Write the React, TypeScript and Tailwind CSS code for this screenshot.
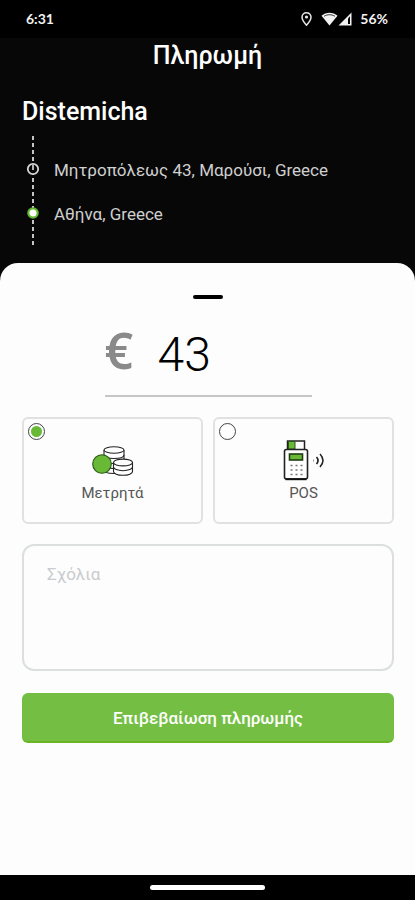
import { useState } from "react";
import type { ReactNode } from "react";

function LocationIcon() {
  return (
    <svg className="h-[14px] w-[11px]" viewBox="0 0 11 14" fill="none" aria-hidden="true">
      <path d="M5.5 .8C2.9.8 1 2.7 1 5.2c0 3 4.5 8 4.5 8s4.500-5 4.500-8C10 2.700 8.100.8 5.500.8Z" stroke="#e6e6e6" strokeWidth="1.500" />
      <circle cx="5.500" cy="5" r="1.600" fill="#e6e6e6" />
    </svg>
  );
}

function WifiIcon() {
  return (
    <svg className="h-[14px] w-[17px]" viewBox="0 0 17 14" aria-hidden="true">
      <path d="M8.500 13.500 .5 3.700C5-.3 12-.3 16.500 3.700L8.500 13.500Z" fill="#f2f2f2" />
      <path d="M3 4.300C6.500 2.200 10.500 2.200 14 4.300" stroke="#000" strokeWidth=".8" fill="none" />
    </svg>
  );
}

function SignalIcon() {
  return (
    <svg className="h-[14px] w-[14px]" viewBox="0 0 14 14" aria-hidden="true">
      <path d="M13.500 .5v13H.5L13.500.5Z" fill="#f2f2f2" />
      <path d="M10 6.500 12 4.300V12h-2Z" fill="#000" />
    </svg>
  );
}

function RouteLine() {
  return (
    <svg className="h-[110px] w-[14px] shrink-0" viewBox="0 0 14 110" fill="none" aria-hidden="true">
      <path d="M7 0V110" stroke="#c4c4c4" strokeWidth="2" strokeDasharray="4 3" />
      <circle cx="7" cy="33" r="5.200" fill="#070707" stroke="#d6d6d6" strokeWidth="1.800" />
      <path d="M7 29V34" stroke="#b3b3b3" strokeWidth="2" />
      <circle cx="7" cy="77" r="4.700" fill="#fff" stroke="#62b82e" strokeWidth="2.200" />
    </svg>
  );
}

function CoinsIcon() {
  return (
    <svg className="mb-1 h-[32px] w-[44px]" viewBox="0 0 44 32" fill="none" stroke="#222" strokeWidth="1.100" aria-hidden="true">
      <path d="M13 5v20c0 2 4 3.500 10 3.500s10-1.500 10-3.500V5" fill="#fff" />
      <ellipse cx="23" cy="5" rx="10" ry="3.300" fill="#fff" />
      <path d="M13 10c0 2 4 3.500 10 3.500S33 12 33 10M13 15c0 2 4 3.500 10 3.500S33 17 33 15M13 20c0 2 4 3.500 10 3.500" />
      <path d="M22.500 17.500v9c0 2 4 3.800 9.500 3.800s9.500-1.800 9.500-3.800v-9" fill="#fff" />
      <ellipse cx="32" cy="17.500" rx="9.500" ry="3.400" fill="#fff" />
      <path d="M22.500 22c0 2 4 3.700 9.500 3.700s9.500-1.700 9.500-3.700" />
      <circle cx="11" cy="19" r="9.300" fill="#68b936" stroke="#2c5716" />
    </svg>
  );
}

function PosIcon() {
  return (
    <svg className="h-[42px] w-[42px]" viewBox="0 0 42 42" fill="none" aria-hidden="true">
      <path d="M4.500 10V2h17v8" fill="#fff" stroke="#222" strokeWidth="1.500" />
      <path d="M5.500 2.500H12V10H5.500Z" fill="#68b936" stroke="#2c5716" />
      <rect x="1.500" y="10.500" width="23" height="29.500" rx="2" fill="#fff" stroke="#222" strokeWidth="1.600" />
      <path d="M2.500 40.200H23.500" stroke="#111" strokeWidth="2" />
      <rect x="6.500" y="15" width="13" height="6" fill="#68b936" stroke="#1f3d10" strokeWidth="1.600" />
      <path d="M7.500 26.500h12M7.500 31h12M7.500 35.500h12" stroke="#777" strokeWidth="1.600" strokeDasharray="2 3" />
      <path d="M30.500 20.500v2" stroke="#999" />
      <path d="M33.500 18q3 3.500 0 7" stroke="#222" strokeWidth="1.600" />
      <path d="M37 15q6 6.500 0 13" stroke="#222" strokeWidth="1.500" />
    </svg>
  );
}

type MethodProps = {
  label: string;
  value: string;
  selected: string;
  onSelect: (value: string) => void;
  children: ReactNode;
};

function MethodCard({ label, value, selected, onSelect, children }: MethodProps) {
  return (
    <label className="relative flex h-[107px] flex-1 flex-col items-center rounded-md border-2 border-[#e0e1e1] pt-5">
      <input
        type="radio"
        name="method"
        value={value}
        checked={selected === value}
        onChange={() => onSelect(value)}
        className="absolute top-1 left-1 size-[17px] appearance-none rounded-full border border-[#444] bg-white bg-clip-content p-[2px] checked:bg-[#68b936]"
      />
      <span className="flex h-[42px] items-end">{children}</span>
      <span className="text-[15px] leading-6 text-[#555]">{label}</span>
    </label>
  );
}

export default function App() {
  const [method, setMethod] = useState("cash");
  const [amount, setAmount] = useState("43");

  return (
    <div className="flex min-h-screen flex-col bg-[#070707] font-['Roboto',sans-serif]">
      <div className="flex h-[38px] items-center justify-between bg-black pr-[27px] pl-[26px] font-['Lato',sans-serif] text-sm font-bold text-[#f2f2f2]">
        <span>6:31</span>
        <div className="flex items-center">
          <LocationIcon />
          <span className="ml-[9px] flex">
            <WifiIcon />
            <SignalIcon />
          </span>
          <span className="ml-2">56%</span>
        </div>
      </div>

      <header className="px-[22px] text-white">
        <h1 className="text-center text-[25px] leading-9 font-medium">Πληρωμή</h1>
        <h2 className="mt-[22px] text-[25px] leading-8 font-medium">Distemicha</h2>
        <div className="mt-2 ml-1 flex gap-[14px]">
          <RouteLine />
          <ul className="pt-3 text-[17px] leading-[44px] text-[#cfcfcf]">
            <li>Μητροπόλεως 43, Μαρούσι, Greece</li>
            <li>Αθήνα, Greece</li>
          </ul>
        </div>
      </header>

      <main className="mt-[17px] flex flex-1 flex-col rounded-t-[18px] bg-[#fdfdfd] pt-8 pr-[21px] pl-[22px]">
        <div className="mx-auto h-1 w-[30px] rounded-full bg-black" />

        <label className="mx-auto mt-6 flex h-[74px] w-[207px] border-b-2 border-[#c6c6c6]">
          <span className="w-[53px] font-['Noto_Sans',sans-serif] text-[50px] leading-[54px] font-semibold text-[#8a8a8a]">€</span>
          <input
            type="text"
            inputMode="decimal"
            aria-label="Ποσό"
            value={amount}
            onChange={(e) => setAmount(e.target.value)}
            className="h-[62px] min-w-0 flex-1 bg-transparent text-5xl font-light text-black outline-none"
          />
        </label>

        <div className="mt-5 flex gap-[10px]">
          <MethodCard label="Μετρητά" value="cash" selected={method} onSelect={setMethod}>
            <CoinsIcon />
          </MethodCard>
          <MethodCard label="POS" value="pos" selected={method} onSelect={setMethod}>
            <PosIcon />
          </MethodCard>
        </div>

        <textarea
          aria-label="Σχόλια"
          placeholder="Σχόλια"
          className="mt-5 block h-[127px] w-full resize-none rounded-xl border-2 border-[#dcdfe0] bg-transparent px-[23px] py-4 text-[17px] leading-6 text-[#444] outline-none placeholder:text-[#c9ccce]"
        />

        <button type="button" className="mt-[22px] h-[50px] w-full rounded-md border-b-2 border-[#69b524] bg-[#74bf43] pt-1 text-[17px] font-medium text-white">
          Επιβεβαίωση πληρωμής
        </button>
      </main>

      <div className="flex h-[25px] items-center justify-center bg-black">
        <div className="h-[5px] w-[115px] rounded-full bg-white" />
      </div>
    </div>
  );
}
